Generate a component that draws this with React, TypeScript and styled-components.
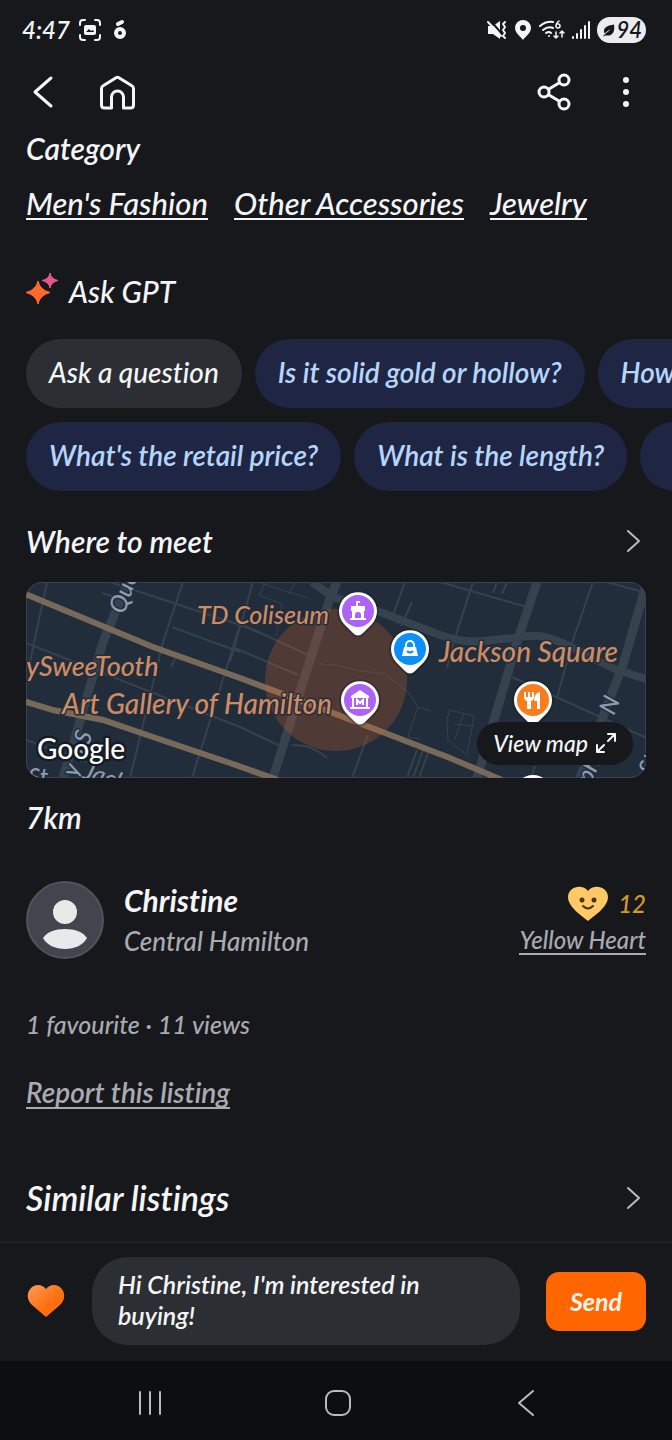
import React from "react";
import styled, { createGlobalStyle } from "styled-components";

const GlobalStyle = createGlobalStyle`
  * { box-sizing: border-box; }
  body { margin: 0; background: #16181c; }
  button, textarea { font: inherit; color: inherit; border: 0; margin: 0; padding: 0; background: none; }
  svg { display: block; flex: none; }
`;

const Page = styled.div`
  display: flex;
  flex-direction: column;
  min-height: 100vh;
  overflow: hidden;
  background: #16181c;
  color: #f4f5f7;
  font-family: Lato, "Liberation Sans", sans-serif;
  font-style: italic;
  font-weight: 500;
  font-size: 28px;
  line-height: 36px;
  font-variant-ligatures: none;
`;

const StatusBar = styled.div`
  display: flex;
  align-items: center;
  justify-content: space-between;
  height: 60px;
  padding: 0 26px 0 22px;
  font-size: 24px;
  font-weight: 600;
`;

const StatusGroup = styled.div<{ $gap: number }>`
  display: flex;
  align-items: center;
  gap: ${(p) => p.$gap}px;
`;

const Battery = styled.span`
  display: flex;
  align-items: center;
  gap: 1px;
  height: 26px;
  padding: 0 4px 0 5px;
  border-radius: 13px;
  background: #ececee;
  color: #16181c;
  font-size: 22px;
  line-height: 26px;
`;

const Header = styled.header`
  display: flex;
  align-items: flex-start;
  justify-content: space-between;
  height: 70px;
  padding: 12px 26px 0;
`;

const HeaderGroup = styled.div<{ $gap: number }>`
  display: flex;
  gap: ${(p) => p.$gap}px;
`;

const IconButton = styled.button`
  display: flex;
  align-items: center;
  justify-content: center;
  height: 40px;
  cursor: pointer;
`;

const Main = styled.main`
  display: flex;
  flex: 1;
  flex-direction: column;
  padding: 0 26px 26px;
`;

const Heading = styled.h2<{ $large?: boolean }>`
  margin: 0;
  font-size: ${(p) => (p.$large ? 34 : 30)}px;
  font-weight: 600;
  line-height: 36px;
`;

const AskHeading = styled(Heading)`
  font-weight: 500;
`;

const Links = styled.nav`
  display: flex;
  gap: 26px;
  margin-top: 22px;
`;

const TextLink = styled.a<{ $muted?: boolean; $small?: boolean }>`
  align-self: flex-start;
  color: ${(p) => (p.$muted ? "#a9abb0" : "#f4f5f7")};
  font-size: ${(p) => (p.$small ? 24 : p.$muted ? 28 : 31)}px;
  font-weight: ${(p) => (p.$muted && !p.$small ? 600 : 500)};
  line-height: ${(p) => (p.$small ? 26 : 30)}px;
  text-decoration: none;
  border-bottom: 2px solid currentColor;
  white-space: nowrap;
`;

const AskTitle = styled.div`
  display: flex;
  align-items: center;
  gap: 10px;
  margin-top: 53px;
`;

const ChipRows = styled.div`
  display: flex;
  flex-direction: column;
  gap: 14px;
  margin: 30px -26px 0 0;
  overflow: hidden;
`;

const ChipRow = styled.div`
  display: flex;
  gap: 13px;
`;

const Chip = styled.button<{ $plain?: boolean }>`
  flex: none;
  min-width: 120px;
  height: 69px;
  padding: 0 23px 3px;
  border-radius: 35px;
  background: ${(p) => (p.$plain ? "#2b2e32" : "#1f2643")};
  color: ${(p) => (p.$plain ? "#f4f5f7" : "#b5d5fb")};
  font-weight: ${(p) => (p.$plain ? 500 : 600)};
  text-align: left;
  white-space: nowrap;
  cursor: pointer;
`;

const SectionRow = styled.div<{ $top: number }>`
  display: flex;
  align-items: center;
  justify-content: space-between;
  margin-top: ${(p) => p.$top}px;
  padding-right: 5px;
`;

const MapCard = styled.div`
  position: relative;
  height: 196px;
  margin-top: 23px;
  border-radius: 16px;
  overflow: hidden;
  background: #222d3b;
  box-shadow: inset 0 0 0 1px #3a4450;
`;

const MapDrawing = styled.svg`
  width: 100%;
  height: 100%;
`;

const ViewMap = styled.button`
  position: absolute;
  right: 13px;
  bottom: 13px;
  display: flex;
  align-items: center;
  gap: 8px;
  height: 43px;
  padding: 0 17px 2px 16px;
  border-radius: 22px;
  background: #16181c;
  font-size: 23px;
  cursor: pointer;
`;

const Distance = styled.p`
  margin: 21px 0 0;
  font-size: 30px;
  font-weight: 600;
`;

const Seller = styled.section`
  display: flex;
  align-items: center;
  gap: 20px;
  margin-top: 46px;
`;

const SellerText = styled.div`
  display: flex;
  flex: 1;
  flex-direction: column;
  gap: 5px;
`;

const SellerName = styled.strong`
  font-size: 30px;
  font-weight: 700;
`;

const Muted = styled.span`
  color: #a9abb0;
  font-size: 26px;
`;

const Badge = styled.div`
  display: flex;
  flex-direction: column;
  align-items: flex-end;
  gap: 5px;
`;

const Score = styled.div`
  display: flex;
  align-items: center;
  gap: 10px;
  color: #d39a26;
  font-size: 24px;
`;

const Stats = styled.p`
  margin: 47px 0 35px;
  color: #a9abb0;
  font-size: 25px;
`;

const MessageBar = styled.form`
  display: flex;
  align-items: center;
  gap: 26px;
  padding: 14px 26px 16px;
  border-top: 1px solid #22252a;
`;

const MessageBox = styled.textarea`
  flex: 1;
  min-width: 0;
  height: 88px;
  padding: 12px 80px 12px 26px;
  border-radius: 36px;
  background: #2b2e32;
  font-size: 25px;
  font-weight: 600;
  line-height: 31px;
  resize: none;
  overflow: hidden;
  outline: none;
`;

const SendButton = styled.button`
  width: 100px;
  height: 59px;
  border-radius: 13px;
  background: #ff6600;
  color: #fff4ea;
  font-size: 25px;
  font-weight: 700;
  cursor: pointer;
`;

const SystemNav = styled.nav`
  display: flex;
  align-items: center;
  justify-content: space-around;
  height: 79px;
  padding: 4px 52px 0 56px;
  background: #0d0e10;
`;

const line = { fill: "none", stroke: "currentColor", strokeLinecap: "round", strokeLinejoin: "round" } as const;

const ForwardIcon = () => (
  <svg width="16" height="26" viewBox="0 0 16 26" {...line} strokeWidth="2" color="#b9bbbf">
    <path d="M3 3l11 10L3 23" />
  </svg>
);

type PinProps = { x: number; y: number; color: string; children?: React.ReactNode };
const Pin = ({ x, y, color, children }: PinProps) => (
  <g transform={`translate(${x} ${y})`}>
    <path d="M-15 15l9 9q6 5 12 0l9-9a21 21 0 1 0-30 0z" fill="#10161f" opacity=".3" />
    <path d="M-14 13l9 9q5 5 10 0l9-9a19 19 0 1 0-28 0z" fill="#fff" />
    <circle r="16" fill={color} />
    {children}
  </g>
);

const CityMap = () => (
  <MapDrawing viewBox="0 0 620 196" preserveAspectRatio="xMidYMid slice" role="img" aria-label="Map of central Hamilton">
    <g fill="none" stroke="#35414f" strokeWidth="2">
      <path d="M21 0L4 80M84 0l130 43 25 10M76 11l24 8M157 0l-20 60-33 136M146 45l68 25M0 61l214 84 38 18M214 43l-48 153M0 158l60 22M227 0l-23 80M211 40l71 33M209 66l63 27M145 85l7-14" />
      <path d="M379 0l-13 36M386 20l-11 24M342 153l-16 43M266 163c15 0 23 3 35 13M447 0l-18 56-8 30M414 0l87 25M567 0l-20 58-16 58M486 95l135 61M581 0l36 10M481 0l-5 12M471 0l-4 11M391 168l-10 28M397 168l-10 28M403 168l-10 28M509 184l-4 12" />
      <path d="M234 1l48 15M240 0l-7 13 23 9-6 32M262 13l7-13M424 128l24 6-7 39-19-14-1-22zM428 142l20 2M438 131l-9 26" strokeWidth="1" />
      <path d="M291 78c4 5 8 6 14 4l25 6 29 4 23 18 10 15-10 30 12 2M392 125l12 4" strokeWidth="1" />
    </g>
    <g fill="none" stroke="#37424f">
      <path d="M102 0L77 60 49 156 37 196" strokeWidth="9" />
      <path d="M311 0l-7 16-27 84-30 96" strokeWidth="9" />
      <path d="M286 0l21 15 47 15 60 23c32 11 45 5 73 3 20-3 28-6 60 10l44 22 29 9" strokeWidth="8" />
      <path d="M511 0l-20 60-40 136" strokeWidth="9" />
      <path d="M620 3l-23 80-13 33-30 80" strokeWidth="9" />
    </g>
    <g fill="none" stroke="#786a58" strokeWidth="6">
      <path d="M-3 11l130 54 87 31 93 35 117 45 52 22" />
      <path d="M-3 119l30 9 50 10 50 17 77 26 48 17" />
    </g>
    <circle cx="310" cy="98" r="71" fill="#e8642a" fillOpacity=".24" />
    <g fill="#8c9cb0" stroke="#222d3b" strokeWidth="3" paintOrder="stroke" fontSize="24">
      <text transform="translate(98 33) rotate(-70)">Queen</text>
      <text transform="translate(51 196) rotate(-70)">y S S</text>
      <text x="56" y="196" transform="rotate(18 56 196)">Jackson</text>
      <text x="2" y="204">St</text>
      <text transform="translate(565 203) rotate(-68)">ph</text>
      <text transform="translate(588 134) rotate(-68)">N</text>
      <text transform="translate(628 194) rotate(-72)">St</text>
    </g>
    <g fill="#cf8c63" stroke="#222d3b" strokeWidth="3" strokeLinejoin="round" paintOrder="stroke" fontSize="27">
      <text x="303" y="42" textAnchor="end" fontSize="25">TD Coliseum</text>
      <text x="413" y="80" fontSize="28">Jackson Square</text>
      <text x="0" y="94">ySweeTooth</text>
      <text x="306" y="132" textAnchor="end" fontSize="28">Art Gallery of Hamilton</text>
    </g>
    <Pin x={332} y={29} color="#ad62f8">
      <path d="M-1-5v-4h3" fill="none" stroke="#fff" strokeWidth="2" />
      <path d="M-7-5H7v5H6v7h2v2H-8V7h2V0h-1zM-3 7h6V4a3 3 0 0 0-6 0z" fill="#fff" fillRule="evenodd" />
    </Pin>
    <Pin x={384} y={67} color="#0b8ff8">
      <path d="M-6-2H6L8 7H-8z" fill="#fff" />
      <path d="M-4-1v-3a4 4 0 0 1 8 0v3" fill="none" stroke="#fff" strokeWidth="2" />
      <path d="M-3 2q3 3 6 0" fill="none" stroke="#0b8ff8" strokeWidth="2" />
    </Pin>
    <Pin x={334} y={118} color="#ad62f8">
      <path d="M0-10L9-4v2H-9v-2zM-8-2h2V7H6v-9h2V7h2v2H-10V7h2z" fill="#fff" />
      <path d="M-3 5v-5l3 3 3-3v5" fill="none" stroke="#fff" strokeWidth="2" />
    </Pin>
    <Pin x={507} y={118} color="#f97d1c">
      <path d="M-9-8h2v5h2v-5h2v5h2v-5h2v5q0 3-3 4v8h-4V1q-3-1-3-4z" fill="#fff" />
      <path d="M7-8Q1-7 1 1h3v8h3z" fill="#fff" />
    </Pin>
    <circle cx="507" cy="212" r="19" fill="#fff" />
    <text x="11" y="177" fill="#fff" stroke="#161c24" strokeWidth="5" strokeLinejoin="round" paintOrder="stroke" fontSize="28" fontStyle="normal" fontWeight="500">Google</text>
  </MapDrawing>
);

export default function App() {
  return (
    <Page>
      <GlobalStyle />
      <StatusBar>
        <StatusGroup $gap={8}>
          <span>4:47</span>
          <svg width="24" height="24" viewBox="0 0 24 24" {...line} strokeWidth="2">
            <path d="M2 7V5q0-3 3-3h2M17 2h2q3 0 3 3v2M22 17v2q0 3-3 3h-2M7 22H5q-3 0-3-3v-2" />
            <rect x="6" y="7" width="12" height="10" rx="2" fill="currentColor" stroke="none" />
            <path d="M8 14l3-3 2 2 2-1 1 2z" fill="#16181c" stroke="none" />
          </svg>
          <svg width="20" height="24" viewBox="2 0 20 24" {...line} strokeWidth="4">
            <circle cx="12" cy="15" r="4" />
            <path d="M10 6l4-2" />
          </svg>
        </StatusGroup>
        <StatusGroup $gap={7}>
          <svg width="20" height="20" viewBox="0 0 20 20" {...line}>
            <path d="M1 6h5l7-5v18l-7-5H1z" fill="currentColor" stroke="none" />
            <path d="M3 0l12 14" stroke="#16181c" strokeWidth="2" />
            <path d="M1 2l13 14" strokeWidth="2" />
            <path d="M18 2l-2 2 2 3-2 3 2 3-2 3 2 2" strokeWidth="2" />
          </svg>
          <svg width="18" height="20" viewBox="0 0 18 20">
            <path d="M9 0a8 8 0 0 1 8 8c0 5-6 9-8 12C7 17 1 13 1 8a8 8 0 0 1 8-8zm0 5a3 3 0 1 0 0 6 3 3 0 0 0 0-6z" fill="currentColor" fillRule="evenodd" />
          </svg>
          <svg width="26" height="20" viewBox="0 0 26 20" {...line} strokeWidth="2">
            <path d="M1 6q6-5 13-4M4 10q5-4 10-2M7 13q3-2 5 0" />
            <circle cx="10" cy="16" r="1" fill="currentColor" stroke="none" />
            <path d="M20 1q-3 2-3 5a2 2 0 1 0 2-2" strokeWidth="1.500" />
            <path d="M17 12v6m-2-2l2 2 2-2M23 17v-6m-2 2l2-2 2 2" strokeWidth="1.500" />
          </svg>
          <svg width="18" height="20" viewBox="0 0 18 20" {...line} strokeWidth="2">
            <path d="M1 17v1M5 14v4M9 10v8M13 6v12M17 2v16" />
          </svg>
          <Battery>
            <svg width="13" height="14" viewBox="0 0 14 14">
              <path d="M13 1c1 7-1 12-7 12-2 0-3 0-5 1l2-3C0 5 5 2 13 1z" fill="#16181c" />
              <path d="M2 12l6-5" stroke="#ececee" strokeWidth="1" />
            </svg>
            94
          </Battery>
        </StatusGroup>
      </StatusBar>

      <Header>
        <HeaderGroup $gap={38}>
          <IconButton aria-label="Back">
            <svg width="36" height="36" viewBox="0 0 36 36" {...line} strokeWidth="3">
              <path d="M25 4L9 18l16 14" />
            </svg>
          </IconButton>
          <IconButton aria-label="Home">
            <svg width="36" height="36" viewBox="0 0 36 36" {...line} strokeWidth="3">
              <path d="M16.500 3.500a2 2 0 0 1 2 0l13 8q2 1 2 3V31q0 3-3 3h-7V23a6 6 0 0 0-12 0v11h-7q-3 0-3-3V14.500q0-2 2-3z" />
            </svg>
          </IconButton>
        </HeaderGroup>
        <HeaderGroup $gap={36}>
          <IconButton aria-label="Share">
            <svg width="36" height="38" viewBox="0 0 36 38" {...line} strokeWidth="3">
              <circle cx="8" cy="19" r="5" />
              <circle cx="28" cy="7" r="5" />
              <circle cx="28" cy="31" r="5" />
              <path d="M13 16l10-6M13 22l10 6" />
            </svg>
          </IconButton>
          <IconButton aria-label="More options">
            <svg width="38" height="36" viewBox="0 0 38 36" fill="currentColor">
              <circle cx="18" cy="6" r="3" />
              <circle cx="18" cy="18" r="3" />
              <circle cx="18" cy="30" r="3" />
            </svg>
          </IconButton>
        </HeaderGroup>
      </Header>

      <Main>
        <Heading>Category</Heading>
        <Links aria-label="Category">
          <TextLink href="#fashion">Men's Fashion</TextLink>
          <TextLink href="#accessories">Other Accessories</TextLink>
          <TextLink href="#jewelry">Jewelry</TextLink>
        </Links>

        <AskTitle>
          <svg width="33" height="36" viewBox="0 0 33 36">
            <path d="M12 8q2 9 12 11.500-10 2.500-12 11.500-2-9-12-11.500 10-2.500 12-11.500z" fill="#ff6a2b" stroke="#ff6a2b" strokeLinejoin="round" />
            <path d="M24 0q1 6 8 7.500-7 1.500-8 7.500-1-6-8-7.500 7-1.500 8-7.500z" fill="#e2588c" stroke="#e2588c" strokeLinejoin="round" />
          </svg>
          <AskHeading>Ask GPT</AskHeading>
        </AskTitle>
        <ChipRows>
          <ChipRow>
            <Chip $plain>Ask a question</Chip>
            <Chip>Is it solid gold or hollow?</Chip>
            <Chip>How</Chip>
          </ChipRow>
          <ChipRow>
            <Chip>What's the retail price?</Chip>
            <Chip>What is the length?</Chip>
            <Chip aria-label="More questions" />
          </ChipRow>
        </ChipRows>

        <SectionRow $top={32}>
          <Heading>Where to meet</Heading>
          <ForwardIcon />
        </SectionRow>
        <MapCard>
          <CityMap />
          <ViewMap>
            View map
            <svg width="20" height="20" viewBox="0 0 20 20" {...line} strokeWidth="2">
              <path d="M12 1h7v7M19 1l-7 7M8 19H1v-7M1 19l7-7" />
            </svg>
          </ViewMap>
        </MapCard>
        <Distance>7km</Distance>

        <Seller>
          <svg width="78" height="78" viewBox="0 0 78 78">
            <circle cx="39" cy="39" r="38" fill="#42454e" stroke="#50535b" strokeWidth="2" />
            <circle cx="39" cy="31" r="12" fill="#e8eaea" />
            <path d="M17 57c4-6 12-9 22-9s18 3 22 9c-4 7-12 11-22 11s-18-4-22-11z" fill="#e8eaea" />
          </svg>
          <SellerText>
            <SellerName>Christine</SellerName>
            <Muted>Central Hamilton</Muted>
          </SellerText>
          <Badge>
            <Score>
              <svg width="40" height="35" viewBox="0 0 40 35">
                <path d="M20 35C14 30 0 21 0 11 0 1 14-3 20 5c6-8 20-4 20 6 0 10-14 19-20 24z" fill="#ffc966" />
                <circle cx="14" cy="14" r="2.500" fill="#4a3318" />
                <circle cx="26" cy="14" r="2.500" fill="#4a3318" />
                <path d="M15 20q5 5 10 0" fill="none" stroke="#4a3318" strokeWidth="2" strokeLinecap="round" />
              </svg>
              12
            </Score>
            <TextLink $muted $small href="#yellow-heart">Yellow Heart</TextLink>
          </Badge>
        </Seller>

        <Stats>1 favourite · 11 views</Stats>
        <TextLink $muted href="#report">Report this listing</TextLink>

        <SectionRow $top={71}>
          <Heading $large>Similar listings</Heading>
          <ForwardIcon />
        </SectionRow>
      </Main>

      <MessageBar onSubmit={(e) => e.preventDefault()}>
        <IconButton type="button" aria-label="Add to favourites">
          <svg width="40" height="36" viewBox="0 0 40 36">
            <defs>
              <linearGradient id="heart" x1="0" y1="0" x2="1" y2="1">
                <stop offset="0" stopColor="#ff9a55" />
                <stop offset=".6" stopColor="#ff6f0f" />
              </linearGradient>
            </defs>
            <path d="M20 34L6 22C0 16 1 9 5 5s11-4 15 1c4-5 11-5 15-1s5 11-1 17z" fill="url(#heart)" />
          </svg>
        </IconButton>
        <MessageBox aria-label="Message" defaultValue="Hi Christine, I'm interested in buying!" />
        <SendButton type="submit">Send</SendButton>
      </MessageBar>

      <SystemNav aria-label="System">
        <IconButton aria-label="Recent apps">
          <svg width="28" height="28" viewBox="0 0 28 28" {...line} strokeWidth="2" color="#b9bbbf">
            <path d="M4 3v22M14 3v22M24 3v22" />
          </svg>
        </IconButton>
        <IconButton aria-label="Home screen">
          <svg width="28" height="28" viewBox="0 0 28 28" {...line} strokeWidth="2" color="#b9bbbf">
            <rect x="2" y="2" width="24" height="24" rx="8" />
          </svg>
        </IconButton>
        <IconButton aria-label="System back">
          <svg width="28" height="28" viewBox="0 0 28 28" {...line} strokeWidth="2" color="#b9bbbf">
            <path d="M21 2L7 14l14 12" />
          </svg>
        </IconButton>
      </SystemNav>
    </Page>
  );
}
